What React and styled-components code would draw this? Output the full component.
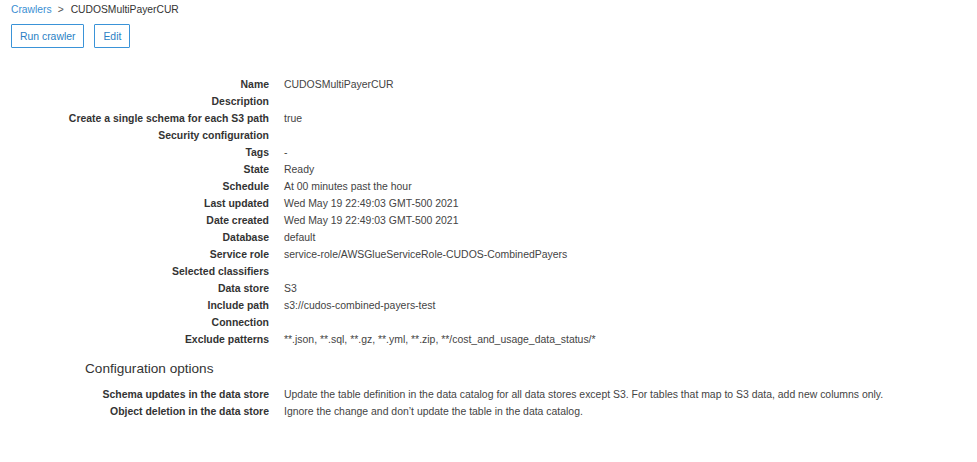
import React from 'react';
import styled, { createGlobalStyle } from 'styled-components';

const GlobalStyle = createGlobalStyle`
    body {
        margin: 0;
        background: #ffffff;
        font-family: "Liberation Sans", Arial, sans-serif;
        color: #444444;
    }
`;

const Page = styled.div`
    padding: 3px 11px 0 11px;
`;

const Breadcrumb = styled.div`
    display: flex;
    align-items: center;
    font-size: 10.3px;
    height: 13px;
    color: #333333;
`;

const Crumb = styled.a`
    color: #3a8fd3;
    text-decoration: none;
`;

const Separator = styled.span`
    margin: 0 7px 0 6px;
    color: #555555;
`;

const Toolbar = styled.div`
    display: flex;
    gap: 10px;
    margin-top: 8px;
`;

const Button = styled.button`
    height: 24px;
    padding: 0 8px;
    background: #ffffff;
    border: 1px solid #3a93d8;
    border-radius: 1px;
    color: #2a7fc4;
    font-family: "Liberation Sans", Arial, sans-serif;
    font-size: 10.4px;
    cursor: pointer;
`;

const DetailGrid = styled.div`
    display: grid;
    grid-template-columns: 258px 1fr;
    column-gap: 15px;
    row-gap: 4px;
    margin-top: ${(p) => p.$top}px;
    font-size: 10.45px;
    line-height: 13px;
`;

const Label = styled.div`
    text-align: right;
    font-weight: bold;
    color: #333333;
`;

const Value = styled.div`
    color: #444444;
    white-space: nowrap;
`;

const SectionTitle = styled.h2`
    margin: 14px 0 0 74px;
    font-size: 13.6px;
    font-weight: normal;
    color: #333333;
    line-height: 17px;
`;

const rows = [
    ['Name', 'CUDOSMultiPayerCUR'],
    ['Description', ''],
    ['Create a single schema for each S3 path', 'true'],
    ['Security configuration', ''],
    ['Tags', '-'],
    ['State', 'Ready'],
    ['Schedule', 'At 00 minutes past the hour'],
    ['Last updated', 'Wed May 19 22:49:03 GMT-500 2021'],
    ['Date created', 'Wed May 19 22:49:03 GMT-500 2021'],
    ['Database', 'default'],
    ['Service role', 'service-role/AWSGlueServiceRole-CUDOS-CombinedPayers'],
    ['Selected classifiers', ''],
    ['Data store', 'S3'],
    ['Include path', 's3://cudos-combined-payers-test'],
    ['Connection', ''],
    ['Exclude patterns', '**.json, **.sql, **.gz, **.yml, **.zip, **/cost_and_usage_data_status/*'],
];

const configRows = [
    ['Schema updates in the data store', 'Update the table definition in the data catalog for all data stores except S3. For tables that map to S3 data, add new columns only.'],
    ['Object deletion in the data store', 'Ignore the change and don\u2019t update the table in the data catalog.'],
];

function Details({ items, top }) {
    return (
        <DetailGrid $top={top}>
            {items.map(([label, value]) => (
                <React.Fragment key={label}>
                    <Label>{label}</Label>
                    <Value>{value}</Value>
                </React.Fragment>
            ))}
        </DetailGrid>
    );
}

export default function App() {
    return (
        <Page>
            <GlobalStyle />
            <Breadcrumb>
                <Crumb href="#">Crawlers</Crumb>
                <Separator>&gt;</Separator>
                <span>CUDOSMultiPayerCUR</span>
            </Breadcrumb>
            <Toolbar>
                <Button>Run crawler</Button>
                <Button>Edit</Button>
            </Toolbar>
            <Details items={rows} top={30} />
            <SectionTitle>Configuration options</SectionTitle>
            <Details items={configRows} top={11} />
        </Page>
    );
}
